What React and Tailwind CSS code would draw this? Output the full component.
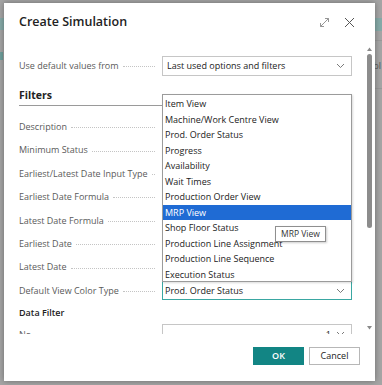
import React from 'react';

const font = { fontFamily: '"Segoe UI", "Open Sans", "Noto Sans", sans-serif' };

const labels = [
  'Description',
  'Minimum Status',
  'Earliest/Latest Date Input Type',
  'Earliest Date Formula',
  'Latest Date Formula',
  'Earliest Date',
  'Latest Date',
];

const options = [
  'Item View',
  'Machine/Work Centre View',
  'Prod. Order Status',
  'Progress',
  'Availability',
  'Wait Times',
  'Production Order View',
  'MRP View',
  'Shop Floor Status',
  'Production Line Assignment',
  'Production Line Sequence',
  'Execution Status',
];

const Chevron = () => (
  <svg width="9" height="6" viewBox="0 0 9 6" className="shrink-0">
    <path d="M1 1 L4.5 4.5 L8 1" fill="none" stroke="#6b6b6b" strokeWidth="0.9" />
  </svg>
);

const Label = ({ text }) => (
  <div className="flex items-center w-[143px] shrink-0 min-w-0 pr-[5px]">
    <span className="whitespace-nowrap text-[#5a5a5a]">{text}</span>
    <span className="flex-1 ml-[4px] mr-[2px] border-b border-dotted border-[#c4c4c4] translate-y-[1px]" />
  </div>
);

const App = () => {
  return (
    <div className="w-[382px] h-[385px] overflow-hidden bg-[#a5a5a5] relative" style={font}>
      {/* dimmed page behind */}
      <div className="absolute left-0 top-[18px] w-[6px] h-[12px] bg-[#86aaa8]" />
      <div className="absolute left-0 top-[52px] w-[3px] h-[8px] bg-[#6f9f9c]" />
      <div className="absolute right-0 top-[18px] w-[10px] h-[13px] bg-[#86aaa8]" />
      <div className="absolute right-0 top-[40px] w-[8px] h-px bg-[#999]" />
      <div className="absolute right-0 top-[88px] w-[8px] h-px bg-[#999]" />
      <div className="absolute right-[1px] top-[59px] text-[9px] text-[#555]">bl</div>

      <div className="absolute left-[4px] top-[3px] w-[371px] h-[378px] bg-white shadow-[0_0_6px_rgba(0,0,0,0.35)] flex flex-col text-[9px] text-[#212121]">
        {/* header */}
        <div className="h-[38px] shrink-0 flex items-center pl-[15px] pr-[20px]">
          <div className="flex-1 text-[12.5px] font-semibold text-[#222] pt-[1px]">Create Simulation</div>
          <svg width="11" height="11" viewBox="0 0 11 11" className="mr-[14px]">
            <path d="M1.5 9.5 L9.5 1.5 M6 1.5 H9.5 V5 M1.5 6 V9.5 H5" fill="none" stroke="#8a8a8a" strokeWidth="0.9" />
          </svg>
          <svg width="11" height="11" viewBox="0 0 11 11">
            <path d="M1 1 L10 10 M10 1 L1 10" fill="none" stroke="#555" strokeWidth="1" />
          </svg>
        </div>

        {/* body */}
        <div className="h-[293px] shrink-0 flex overflow-hidden">
          <div className="flex-1 pl-[15px] pr-[12px] pt-[14px] overflow-hidden">
            <div className="flex items-center h-[21px]">
              <Label text="Use default values from" />
              <div className="w-[190px] h-[20px] border border-[#c6c6c6] flex items-center pl-[4px] pr-[6px]">
                <span className="flex-1">Last used options and filters</span>
                <Chevron />
              </div>
            </div>

            <div className="mt-[11px] h-[19px] w-[143px] border-b border-[#9a9a9a] text-[10.5px] font-bold flex items-center text-[#222]">
              Filters
            </div>

            <div className="mt-[9px]">
              {labels.map((l) => (
                <div key={l} className="flex items-center h-[23.43px]">
                  <Label text={l} />
                  <div className="w-[190px]" />
                </div>
              ))}
              <div className="flex items-center h-[23.43px]">
                <Label text="Default View Color Type" />
                <div className="w-[190px] h-[19px] border border-[#3aa7a2] flex items-center pl-[2px] pr-[6px]">
                  <span className="flex-1">Prod. Order Status</span>
                  <Chevron />
                </div>
              </div>
            </div>

            <div className="mt-[3px] h-[15px] flex items-center font-semibold text-[#222]">Data Filter</div>
            <div className="flex items-center h-[20px] mt-[4px]">
              <Label text="No." />
              <div className="w-[190px] h-[20px] border border-[#c6c6c6] flex items-center justify-end pr-[6px] gap-[5px]">
                <span>1</span>
                <Chevron />
              </div>
            </div>
          </div>

          {/* scrollbar */}
          <div className="w-[10px] shrink-0 flex flex-col items-center pt-[6px] mr-[1px]">
            <svg width="5" height="4" viewBox="0 0 5 4"><path d="M0 4 L2.5 0.5 L5 4 Z" fill="#8a8a8a" /></svg>
            <div className="w-[5px] h-[174px] bg-[#8c8c8c] rounded-[3px] mt-[3px]" />
            <div className="flex-1" />
            <svg width="5" height="4" viewBox="0 0 5 4" className="mb-[4px]"><path d="M0 0 L2.5 3.5 L5 0 Z" fill="#8a8a8a" /></svg>
          </div>
        </div>

        {/* footer */}
        <div className="flex-1 flex items-start justify-end pr-[15px] pt-[13px] gap-[5px]">
          <button className="w-[51px] h-[18px] bg-[#128584] text-white font-semibold text-[9px]">OK</button>
          <button className="w-[51px] h-[18px] bg-white border border-[#b7b7b7] text-[#222] text-[9px]">Cancel</button>
        </div>

        {/* open dropdown list */}
        <div className="absolute left-[158px] top-[91px] w-[190px] h-[188px] bg-white border border-[#9b9b9b] pt-px shadow-[1px_1px_2px_rgba(0,0,0,0.15)]">
          {options.map((o) => (
            <div
              key={o}
              className={
                o === 'MRP View'
                  ? 'h-[15.5px] flex items-center pl-[2px] bg-[#1f6bd4] text-white'
                  : 'h-[15.5px] flex items-center pl-[2px] text-[#222]'
              }
            >
              {o}
            </div>
          ))}
        </div>

        {/* tooltip */}
        <div className="absolute left-[271px] top-[223px] h-[16px] px-[5px] bg-white border border-[#8f8f8f] flex items-center text-[8.5px] text-[#333] shadow-[1px_1px_2px_rgba(0,0,0,0.2)]">
          MRP View
        </div>
      </div>
    </div>
  );
};

export default App;
